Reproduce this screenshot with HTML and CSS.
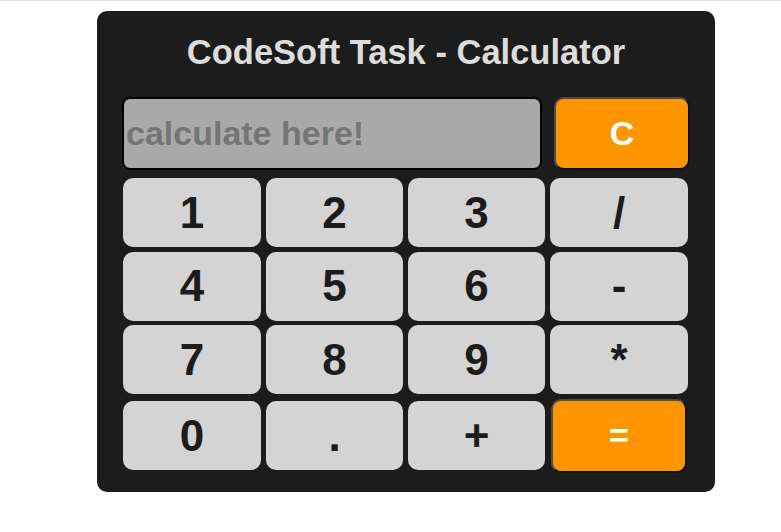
FILE: index.html
```html
<!DOCTYPE html>
<html lang="en">
<head>
<meta charset="utf-8">
<title>CodeSoft Task - Calculator</title>
<link rel="stylesheet" href="styles.css">
</head>
<body>
<div class="page">
  <div class="calculator">
    <h1 class="title">CodeSoft Task - Calculator</h1>
    <div class="top-row">
      <input class="display" type="text" placeholder="calculate here!">
      <button class="key key-orange key-clear">C</button>
    </div>
    <div class="keys">
      <button class="key key-grey">1</button>
      <button class="key key-grey">2</button>
      <button class="key key-grey">3</button>
      <button class="key key-grey">/</button>
      <button class="key key-grey">4</button>
      <button class="key key-grey">5</button>
      <button class="key key-grey">6</button>
      <button class="key key-grey">-</button>
      <button class="key key-grey">7</button>
      <button class="key key-grey">8</button>
      <button class="key key-grey">9</button>
      <button class="key key-grey">*</button>
      <button class="key key-grey">0</button>
      <button class="key key-grey">.</button>
      <button class="key key-grey">+</button>
      <button class="key key-orange key-equal">=</button>
    </div>
  </div>
</div>
</body>
</html>
```

FILE: styles.css
```css
* { box-sizing: border-box; }

html, body {
  margin: 0;
  padding: 0;
  background: #ffffff;
}

body {
  border-top: 1px solid #dedede;
  font-family: "Liberation Sans", Arial, sans-serif;
}

.page {
  padding: 10px 0 0 97px;
}

.calculator {
  width: 618px;
  background: #1c1c1c;
  border-radius: 10px;
  padding: 22px 25px 19px 25px;
}

.title {
  margin: 0;
  font-size: 34.5px;
  line-height: 39px;
  font-weight: bold;
  color: #dcdcdc;
  text-align: center;
}

.top-row {
  display: flex;
  gap: 12px;
  margin-top: 25px;
}

.display {
  width: 420px;
  height: 73px;
  margin: 0;
  padding: 1px 2px;
  background: #a9a9a9;
  border: 2px solid #000;
  border-radius: 8px;
  font-family: "Liberation Sans", Arial, sans-serif;
  font-size: 34px;
  font-weight: bold;
  color: #333;
  outline: none;
}

.display::placeholder {
  color: #757575;
}

.key {
  margin: 0;
  padding: 0;
  font-family: "Liberation Sans", Arial, sans-serif;
  font-weight: bold;
  cursor: pointer;
}

.key-grey {
  background: #d4d4d4;
  border: none;
  border-radius: 10px;
  color: #1c1c1c;
  font-size: 44px;
  height: 69px;
  align-self: center;
}

.key-orange {
  background: #ff9500;
  color: #ffffff;
  border: 2px solid;
  border-color: #4d4d4d #111 #111 #4d4d4d;
  border-radius: 10px;
  font-size: 34px;
}

.key-clear {
  width: 136px;
  height: 73px;
}

.keys {
  display: grid;
  grid-template-columns: 138px 137px 137px 138px;
  grid-template-rows: 69px 69px 69px 74px;
  column-gap: 5px;
  row-gap: 4.5px;
  margin: 8px 2px 0 1px;
}

.key-equal {
  width: 136px;
  height: 74px;
  justify-self: center;
}
```
